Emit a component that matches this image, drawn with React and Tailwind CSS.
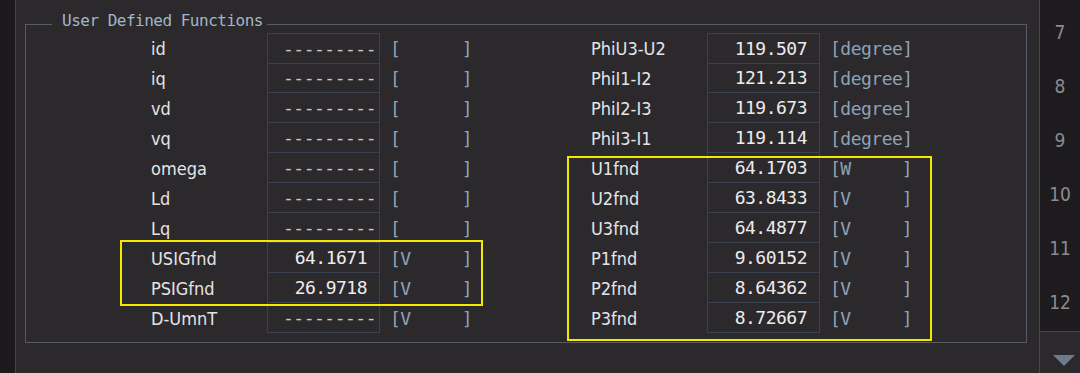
const left = [
    { label: "id", value: null, unit: "" },
    { label: "iq", value: null, unit: "" },
    { label: "vd", value: null, unit: "" },
    { label: "vq", value: null, unit: "" },
    { label: "omega", value: null, unit: "" },
    { label: "Ld", value: null, unit: "" },
    { label: "Lq", value: null, unit: "" },
    { label: "USIGfnd", value: "64.1671", unit: "V" },
    { label: "PSIGfnd", value: "26.9718", unit: "V" },
    { label: "D-UmnT", value: null, unit: "V" },
];

const right = [
    { label: "PhiU3-U2", value: "119.507", unit: "degree" },
    { label: "PhiI1-I2", value: "121.213", unit: "degree" },
    { label: "PhiI2-I3", value: "119.673", unit: "degree" },
    { label: "PhiI3-I1", value: "119.114", unit: "degree" },
    { label: "U1fnd", value: "64.1703", unit: "W" },
    { label: "U2fnd", value: "63.8433", unit: "V" },
    { label: "U3fnd", value: "64.4877", unit: "V" },
    { label: "P1fnd", value: "9.60152", unit: "V" },
    { label: "P2fnd", value: "8.64362", unit: "V" },
    { label: "P3fnd", value: "8.72667", unit: "V" },
];

const labelFont = "font-['DejaVu_Sans_Condensed','DejaVu_Sans',sans-serif]";
const monoFont = "font-['DejaVu_Sans_Mono','Liberation_Mono',monospace]";

function Row({ row, first }) {
    return (
        <div className="flex items-center h-[30px]">
            <div className={`w-[116px] text-[18px] text-[#e4e4e4] ${labelFont}`}>{row.label}</div>
            <div
                className={`w-[113px] h-[30px] border-x border-b border-[#39414f] flex items-center justify-end ${first ? "border-t h-[31px]" : ""} ${monoFont} text-[18px] tracking-[-0.5px]`}
            >
                {row.value ? (
                    <span className="pr-[12px] text-[#ececec]">{row.value}</span>
                ) : (
                    <span className="pr-[3px] text-[#c9c9c9]">---------</span>
                )}
            </div>
            {row.unit === "degree" ? (
                <div className={`ml-[10px] w-[84px] text-[18px] tracking-[-0.5px] text-[#8ea2b4] ${monoFont}`}>[degree]</div>
            ) : (
                <div className={`ml-[10px] w-[82px] flex justify-between text-[18px] tracking-[-0.5px] text-[#8ea2b4] ${monoFont}`}>
                    <span>[{row.unit}</span>
                    <span>]</span>
                </div>
            )}
        </div>
    );
}

export default function App() {
    const marks = [7, 8, 9, 10, 11, 12];

    return (
        <div className="relative w-[1080px] h-[373px] flex bg-[#2c292d] overflow-hidden">
            <div className="w-[16px] h-full bg-[#1b191c] border-r border-[#44424d]" />

            <div className="flex-1 pt-[24px] pl-[9px]">
                <div className="relative w-[1002px] h-[319px] border border-[#5a5968] pt-[8px]">
                    <div className={`absolute left-[26px] top-[-15px] bg-[#2c292d] pl-[10px] pr-[4px] text-[16px] leading-[22px] tracking-[-0.5px] text-[#a3b6c6] ${monoFont}`}>
                        User Defined Functions
                    </div>
                    <div className="flex pl-[125px]">
                        <div className="flex flex-col">
                            {left.map((row, i) => (
                                <Row key={row.label} row={row} first={i === 0} />
                            ))}
                        </div>
                        <div className="flex flex-col ml-[119px]">
                            {right.map((row, i) => (
                                <Row key={row.label} row={row} first={i === 0} />
                            ))}
                        </div>
                    </div>
                </div>
            </div>

            <div className="w-[41px] h-full flex flex-col border-l border-[#474553]">
                <div className={`h-[332px] bg-[#1d1b1e] border-b border-[#474553] flex flex-col items-center pt-[5px] text-[19px] text-[#8c8b91] ${labelFont}`}>
                    {marks.map((m) => (
                        <div key={m} className="h-[54px] flex items-center">{m}</div>
                    ))}
                </div>
                <div className="flex-1 pt-[23px] pl-[13px]">
                    <svg width="22" height="11" viewBox="0 0 22 11">
                        <polygon points="0,0 22,0 11,11" fill="#6d7a8a" />
                    </svg>
                </div>
            </div>

            {/* highlight frames */}
            <div className="absolute left-[120px] top-[240px] w-[363px] h-[66px] border-2 border-[#f4e800] pointer-events-none" />
            <div className="absolute left-[567px] top-[156px] w-[365px] h-[185px] border-2 border-[#f4e800] pointer-events-none" />
        </div>
    );
}
